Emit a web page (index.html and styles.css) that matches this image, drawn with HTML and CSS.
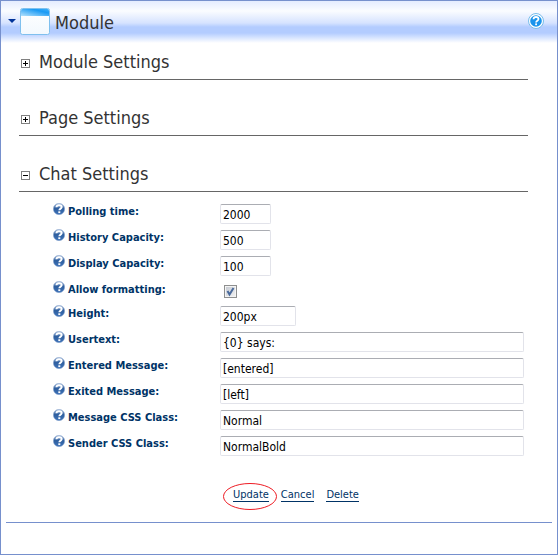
FILE: index.html
```html
<!DOCTYPE html>
<html lang="en">
<head>
<meta charset="utf-8">
<title>Module</title>
<link rel="stylesheet" href="styles.css">
</head>
<body>
<svg class="defs" aria-hidden="true">
  <defs>
    <linearGradient id="ball" x1="0" y1="0" x2="0" y2="1"><stop offset="0" stop-color="#a9c0e0"/><stop offset=".45" stop-color="#2f5f9f"/><stop offset="1" stop-color="#3d72b8"/></linearGradient>
    <linearGradient id="bar" x1="0" y1="1" x2="1" y2="0"><stop offset="0" stop-color="#b4e2fd"/><stop offset=".7" stop-color="#1a9af4"/><stop offset="1" stop-color="#3fb0fa"/></linearGradient>
    <linearGradient id="pane" x1="0" y1="0" x2="0" y2="1"><stop offset="0" stop-color="#ffffff"/><stop offset="1" stop-color="#f3f9fe"/></linearGradient>
    <symbol id="help" viewBox="0 0 12 12">
      <circle cx="6" cy="6" r="5.7" fill="url(#ball)" stroke="#8fa9cf" stroke-width=".5"/>
      <path d="M3.4 4.3C3.5 2.8 4.700 2.200 6.100 2.200c1.500 0 2.600.7 2.600 1.900C8.700 5.600 6.400 5.600 6.300 7.300" fill="none" stroke="#fff" stroke-width="1.900"/>
      <rect x="5.300" y="8.300" width="2" height="1.800" fill="#fff"/>
    </symbol>
  </defs>
</svg>
<main class="module">
  <header class="bar">
    <svg class="arrow" viewBox="0 0 8 4" aria-hidden="true"><path d="M0 0h8L4 4z" fill="#003399"/></svg>
    <svg class="window" viewBox="0 0 30 27" aria-hidden="true">
      <rect x=".5" y=".5" width="29" height="26" rx="2" fill="url(#pane)" stroke="#7fc0ee"/>
      <path d="M1 8V2.500Q1 1 2.500 1h25Q29 1 29 2.500V8z" fill="url(#bar)"/>
    </svg>
    <h1>Module</h1>
    <a class="help-link" href="#" aria-label="Help">
      <svg viewBox="0 0 16 16" aria-hidden="true">
        <circle cx="8" cy="8" r="7.500" fill="#fff" stroke="#79bdea"/>
        <circle cx="8" cy="8" r="5.800" fill="#1a94ec"/>
        <path d="M5.500 6.300C5.600 4.700 6.700 4 8 4c1.500 0 2.500.8 2.500 2C10.500 7.700 8.100 7.600 8.100 9.400" fill="none" stroke="#fff" stroke-width="1.800"/>
        <rect x="7.200" y="10.400" width="1.800" height="1.800" fill="#fff"/>
      </svg>
    </a>
  </header>
  <div class="content">
    <section><h2><button class="toggle plus" aria-label="Expand Module Settings"></button>Module Settings</h2></section>
    <section><h2><button class="toggle plus" aria-label="Expand Page Settings"></button>Page Settings</h2></section>
    <section><h2><button class="toggle" aria-label="Collapse Chat Settings"></button>Chat Settings</h2></section>
    <form>
      <div class="row"><svg class="help"><use href="#help"/></svg><label for="polling">Polling time:</label><input class="short" id="polling" type="text" value="2000"></div>
      <div class="row"><svg class="help"><use href="#help"/></svg><label for="history">History Capacity:</label><input class="short" id="history" type="text" value="500"></div>
      <div class="row"><svg class="help"><use href="#help"/></svg><label for="display">Display Capacity:</label><input class="short" id="display" type="text" value="100"></div>
      <div class="row check"><svg class="help"><use href="#help"/></svg><label for="format">Allow formatting:</label><span class="tick"><input id="format" type="checkbox" checked><svg viewBox="0 0 13 13" aria-hidden="true"><path d="M3.500 6l2 3.500L9.500 3" fill="none" stroke="#4a6a9c" stroke-width="2"/></svg></span></div>
      <div class="row"><svg class="help"><use href="#help"/></svg><label for="height">Height:</label><input class="medium" id="height" type="text" value="200px"></div>
      <div class="row"><svg class="help"><use href="#help"/></svg><label for="usertext">Usertext:</label><input id="usertext" type="text" value="{0} says:"></div>
      <div class="row"><svg class="help"><use href="#help"/></svg><label for="entered">Entered Message:</label><input id="entered" type="text" value="[entered]"></div>
      <div class="row"><svg class="help"><use href="#help"/></svg><label for="exited">Exited Message:</label><input id="exited" type="text" value="[left]"></div>
      <div class="row"><svg class="help"><use href="#help"/></svg><label for="message">Message CSS Class:</label><input id="message" type="text" value="Normal"></div>
      <div class="row"><svg class="help"><use href="#help"/></svg><label for="sender">Sender CSS Class:</label><input id="sender" type="text" value="NormalBold"></div>
    </form>
  </div>
  <nav class="actions">
    <a class="marked" href="#">Update<svg class="ring" viewBox="0 0 54 27" aria-hidden="true"><ellipse cx="27" cy="13.500" rx="26.500" ry="13" fill="none" stroke="#ee1c24"/></svg></a>
    <a href="#">Cancel</a>
    <a href="#">Delete</a>
  </nav>
</main>
</body>
</html>
```
FILE: styles.css
```css
* { box-sizing: border-box; }
body {
  margin: 0;
  background: #fff;
  font-family: Tahoma, "DejaVu Sans Condensed", "Noto Sans", sans-serif;
  font-size: 11px;
  color: #333;
}
.defs { position: absolute; width: 0; height: 0; }
.module { min-height: 100vh; border: 1px solid #7690cd; }
.bar {
  display: flex;
  align-items: center;
  height: 42px;
  padding: 0 13px 2px 7px;
  background: linear-gradient(#e4ecff 0, #fafcff 10px, #d6e3ff 22px, #b3ccff 26px, #b3ccff 32px, #fff 42px);
}
.arrow { width: 8px; height: 4px; margin-right: 4px; }
.window { width: 30px; height: 27px; margin-right: 5px; }
h1, h2 { margin: 0; font-size: 18px; font-weight: normal; line-height: 24px; }
h1 { padding-top: 3px; }
.help-link { margin-left: auto; height: 16px; }
.help-link svg { width: 16px; height: 16px; }
.content { margin: 0 29px 0 18px; }
section { height: 56px; padding-top: 26px; border-bottom: 1px solid #666; }
section:first-child { height: 37px; padding-top: 7px; }
h2 { display: flex; align-items: center; }
.toggle {
  width: 9px;
  height: 9px;
  margin: 3px 9px 0 2px;
  padding: 0;
  border: 1px solid #808080;
  background: linear-gradient(#000, #000) center / 5px 1px no-repeat #fff;
}
.plus {
  background:
    linear-gradient(#000, #000) center / 5px 1px no-repeat,
    linear-gradient(#000, #000) center / 1px 5px no-repeat #fff;
}
form { padding: 11px 4px 0 34px; }
.row {
  display: grid;
  grid-template-columns: 12px 149px 1fr;
  column-gap: 3px;
  align-items: start;
  height: 26px;
}
.row.check { height: 24px; }
.help { width: 12px; height: 12px; }
label { color: #003366; font-weight: bold; line-height: 18px; }
input[type="text"] {
  width: 100%;
  height: 20px;
  margin: 1px 0 0;
  padding: 3px 2px 1px;
  border: 1px solid #e2e3ea;
  border-top-color: #abadb3;
  border-radius: 2px;
  background: #fff;
  font: 12px/14px Tahoma, "DejaVu Sans Condensed", "Noto Sans", sans-serif;
  color: #000;
}
input.short { width: 51px; }
input.medium { width: 76px; }
.tick { display: grid; width: 13px; margin: 4px 0 0 4px; }
.tick > * { grid-area: 1 / 1; width: 13px; height: 13px; margin: 0; }
.tick input {
  appearance: none;
  border: 1px solid #8e8f8f;
  background: linear-gradient(135deg, #c3c8d0, #f4f4f4);
  box-shadow: inset 0 0 0 1px #f4f4f4;
}
.tick svg { pointer-events: none; }
.actions {
  display: flex;
  gap: 12px;
  margin: 0 5px;
  padding: 28px 0 20px 227px;
  border-bottom: 1px solid #7690cd;
  line-height: 12px;
}
.actions a { position: relative; color: #003366; text-decoration: none; border-bottom: 1px solid #003366; }
.ring { position: absolute; left: -10px; top: -6px; width: 54px; height: 27px; }
```
